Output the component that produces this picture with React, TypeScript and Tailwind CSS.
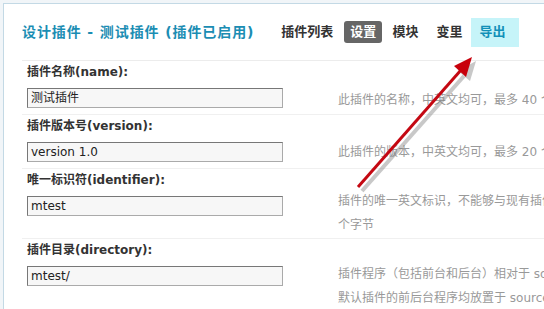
import React from 'react';

const font = { fontFamily: '"DejaVu Sans", "Noto Sans CJK SC", sans-serif' };

type Row = { label: string; value: string; desc: string[]; pb: string; dt: string };

const rows: Row[] = [
  { label: '插件名称(name):', value: '测试插件', desc: ['此插件的名称，中英文均可，最多 40 个字节'], pb: 'pb-[6px]', dt: 'pt-[27px]' },
  { label: '插件版本号(version):', value: 'version 1.0', desc: ['此插件的版本，中英文均可，最多 20 个字节'], pb: 'pb-[6px]', dt: 'pt-[25px]' },
  { label: '唯一标识符(identifier):', value: 'mtest', desc: ['插件的唯一英文标识，不能够与现有插件标识重复，最多 40', '个字节'], pb: 'pb-[22px]', dt: 'pt-[20px]' },
  { label: '插件目录(directory):', value: 'mtest/', desc: ['插件程序（包括前台和后台）相对于 source/plugin/ 的目录', '默认插件的前后台程序均放置于 source/plugin/'], pb: 'pb-[20px]', dt: 'pt-[23px]' },
];

export default function App() {
  return (
    <div className="relative w-[544px] h-[309px] overflow-hidden bg-[#f1f5f8] pl-[3px] pt-[3px]" style={font}>
      <div className="h-full border-l border-t border-[#c3d9e5] bg-white pl-[18px]">
        {/* header */}
        <div className="flex h-[57px] items-center border-b border-[#ececec]">
          <h1 className="text-[14px] font-bold tracking-[0.9px] text-[#1b8db3]">设计插件 - 测试插件 (插件已启用)</h1>
          <nav className="ml-[27px] flex items-center text-[13px] font-bold text-[#333]">
            <span>插件列表</span>
            <span className="ml-[11px] rounded-[3px] bg-[#666] px-[6px] py-[1px] text-white">设置</span>
            <span className="ml-[10px]">模块</span>
            <span className="ml-[18px]">变里</span>
            <span className="ml-[9px] flex h-[29px] w-[48px] items-center bg-[#c6f4f9] pl-[8px] text-[#1290b8]">导出</span>
          </nav>
        </div>
        {/* form rows */}
        {rows.map((r, i) => (
          <div key={i} className={`flex border-b ${i === rows.length - 1 ? 'border-dotted border-[#d8e4ec]' : 'border-[#f0f0f0]'}`}>
            <div className={`w-[316px] shrink-0 pl-[5px] pt-[3px] ${r.pb}`}>
              <div className="text-[12px] font-bold leading-[16px] text-[#333]">{r.label}</div>
              <div className="mt-[8px] flex h-[20px] w-[256px] items-center border border-[#aaa] border-t-[#777] border-l-[#777] bg-[#f7f7f7] pl-[3px] text-[12px] text-[#222]">
                {r.value}
              </div>
            </div>
            <div className={`whitespace-nowrap text-[12px] leading-[24px] text-[#999] ${r.dt}`}>
              {r.desc.map((d, j) => (
                <div key={j}>{d}</div>
              ))}
            </div>
          </div>
        ))}
      </div>
      {/* annotation arrow */}
      <svg className="pointer-events-none absolute left-0 top-0" width="544" height="309">
        <defs>
          <linearGradient id="ar" x1="0" y1="0" x2="1" y2="1">
            <stop offset="0" stopColor="#e0101a" />
            <stop offset="1" stopColor="#a8000a" />
          </linearGradient>
        </defs>
        <g opacity="0.4" stroke="#777" fill="#777">
          <line x1="362" y1="191" x2="464" y2="76" strokeWidth="4" />
          <polygon points="476,61 458,71 470,81" stroke="none" />
        </g>
        <line x1="358" y1="187" x2="461" y2="70" stroke="url(#ar)" strokeWidth="3" />
        <polygon points="472,57 454,66 466,77" fill="#c8000c" />
      </svg>
    </div>
  );
}
